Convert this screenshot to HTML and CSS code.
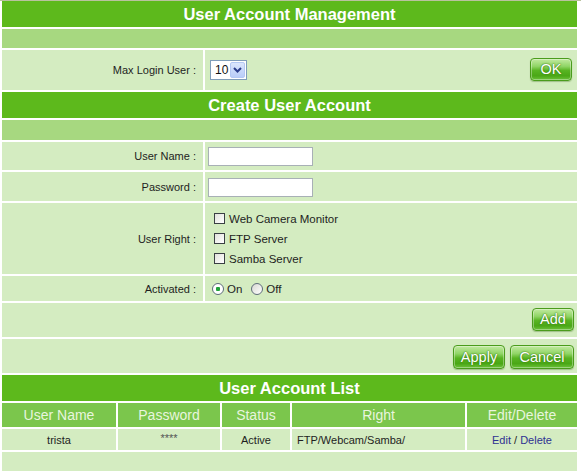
FILE: index.html
```html
<!DOCTYPE html>
<html>
<head>
<meta charset="utf-8">
<title>User Account Management</title>
<link rel="stylesheet" href="styles.css">
</head>
<body>
<div class="frame">
  <div class="page">
    <div class="head">User Account Management</div>
    <div class="band"></div>
    <div class="row r-max">
      <div class="lbl">Max Login User :</div>
      <div class="val spread">
        <div class="select"><span class="sel-text">10</span><span class="sel-btn"><svg width="9" height="6" viewBox="0 0 9 6"><path d="M1 1 L4.5 4.5 L8 1" fill="none" stroke="#2b3d8c" stroke-width="2"/></svg></span></div>
        <button class="btn btn-ok">OK</button>
      </div>
    </div>

    <div class="head">Create User Account</div>
    <div class="band b20"></div>
    <div class="row r-name">
      <div class="lbl">User Name :</div>
      <div class="val"><input class="txt" type="text"></div>
    </div>
    <div class="row r-pass">
      <div class="lbl">Password :</div>
      <div class="val"><input class="txt" type="password"></div>
    </div>
    <div class="row r-right">
      <div class="lbl">User Right :</div>
      <div class="val">
        <div class="checks">
          <label class="opt"><input class="cb" type="checkbox"><span>Web Camera Monitor</span></label>
          <label class="opt"><input class="cb" type="checkbox"><span>FTP Server</span></label>
          <label class="opt"><input class="cb" type="checkbox"><span>Samba Server</span></label>
        </div>
      </div>
    </div>
    <div class="row r-act">
      <div class="lbl">Activated :</div>
      <div class="val radios">
        <label class="ropt"><input class="rd" type="radio" name="act" checked><span>On</span></label>
        <label class="ropt"><input class="rd" type="radio" name="act"><span>Off</span></label>
      </div>
    </div>
    <div class="full r-add"><button class="btn btn-add">Add</button></div>
    <div class="full r-apply"><button class="btn btn-apply">Apply</button><button class="btn btn-cancel">Cancel</button></div>

    <div class="head">User Account List</div>
    <div class="list-row list-head">
      <div>User Name</div><div>Password</div><div>Status</div><div>Right</div><div>Edit/Delete</div>
    </div>
    <div class="list-row list-data">
      <div>trista</div><div class="stars">****</div><div>Active</div><div class="left">FTP/Webcam/Samba/</div><div><a class="lnk">Edit</a> / <a class="lnk">Delete</a></div>
    </div>
    <div class="foot"></div>
  </div>
</div>
</body>
</html>
```

FILE: styles.css
```css
html, body {
  margin: 0;
  padding: 0;
  background: #ffffff;
}
body {
  font-family: "Liberation Sans", Arial, sans-serif;
  font-size: 11px;
  color: #1e1e1e;
}
.frame {
  width: 581px;
  height: 473px;
  border-top: 1px solid #b9c29f;
  box-sizing: border-box;
  padding-left: 2px;
}
.page {
  width: 575px;
  display: flex;
  flex-direction: column;
  gap: 2px;
}
.head {
  height: 26px;
  background: #5db91c;
  color: #ffffff;
  font-weight: bold;
  font-size: 16.5px;
  display: flex;
  align-items: center;
  justify-content: center;
}
.band {
  height: 19px;
  background: #a7d880;
}
.band.b20 { height: 20px; }
.row {
  display: grid;
  grid-template-columns: 201px 1fr;
  gap: 2px;
}
.row > div {
  background: #d4ecc1;
}
.lbl {
  display: flex;
  align-items: center;
  justify-content: flex-end;
  padding-right: 7px;
}
.val {
  display: flex;
  align-items: center;
  padding-left: 3px;
}
.spread {
  justify-content: space-between;
  padding-left: 5px;
  padding-right: 5px;
}
.r-max { height: 40px; }
.r-name { height: 28px; }
.r-pass { height: 29px; }
.r-right { height: 71px; }
.r-act { height: 25px; }

.select {
  width: 35px;
  height: 18px;
  border: 1px solid #7f9db9;
  background: #fff;
  display: flex;
  align-items: stretch;
  box-sizing: content-box;
}
.sel-text {
  flex: 1;
  padding-left: 4px;
  font-size: 12px;
  line-height: 18px;
  color: #111;
}
.sel-btn {
  width: 13px;
  margin: 1px;
  background: linear-gradient(#dbe6fd, #b9cdf8);
  border: 1px solid #b4c8f4;
  border-radius: 2px;
  display: flex;
  align-items: center;
  justify-content: center;
}

.txt {
  width: 105px;
  height: 19px;
  box-sizing: border-box;
  border: 1px solid #a8b0b6;
  background: #fff;
  margin: 0;
  padding: 0 2px;
  font: 11px "Liberation Sans", Arial, sans-serif;
  outline: none;
}
.r-name .txt { margin-top: 1px; }
.r-pass .txt { margin-top: 1px; }

.checks {
  display: flex;
  flex-direction: column;
  padding-left: 6px;
}
.opt {
  height: 20px;
  display: flex;
  align-items: center;
  gap: 4px;
  font-size: 11.5px;
}
.cb {
  appearance: none;
  -webkit-appearance: none;
  width: 11px;
  height: 11px;
  margin: 0;
  border: 1px solid #3a3f44;
  background: linear-gradient(135deg, #e2e2dc, #ffffff);
  box-sizing: border-box;
}
.radios {
  padding-left: 7px;
  gap: 4px;
}
.ropt {
  display: flex;
  align-items: center;
  gap: 3px;
  font-size: 11.5px;
  margin-right: 6px;
}
.ropt + .ropt { margin-left: -1px; }
.rd {
  appearance: none;
  -webkit-appearance: none;
  width: 12px;
  height: 12px;
  margin: 0;
  border-radius: 50%;
  border: 1px solid #5f6d7a;
  background: linear-gradient(135deg, #d8d8d2, #ffffff);
  box-sizing: border-box;
}
.rd:checked {
  background: radial-gradient(circle, #1fa23a 0 2px, #ffffff 2.5px);
}

.full {
  background: #d4ecc1;
  display: flex;
  align-items: center;
  justify-content: flex-end;
  padding-right: 3px;
  gap: 5px;
}
.r-add { height: 34px; }
.r-apply { height: 34px; padding-right: 3px; }

.btn {
  font-family: "Liberation Sans", Arial, sans-serif;
  font-size: 14.5px;
  color: #ffffff;
  text-shadow: 0 0 2px #3a7e12, 0 0 1px #3a7e12;
  border: 1px solid #4a9c1c;
  border-radius: 4px;
  background: linear-gradient(#c2eaa0 0%, #90d566 35%, #58b422 55%, #4aa716 80%, #6cc23a 100%);
  box-shadow: inset 0 0 0 1px rgba(255,255,255,0.35), 0 1px 1px rgba(60,110,30,0.35);
  padding: 0;
  margin: 0;
  height: 23px;
  line-height: 20px;
  cursor: pointer;
}
.btn-ok { width: 42px; margin-top: -2px; }
.btn-add { width: 42px; height: 23px; margin-top: -2px; }
.btn-apply { width: 52px; height: 24px; margin-top: 2px; }
.btn-cancel { width: 64px; height: 24px; margin-top: 2px; }

.list-row {
  display: grid;
  grid-template-columns: 114px 102px 68px 173px 110px;
  gap: 2px;
}
.list-head { height: 24px; }
.list-head > div {
  background: #7bc64c;
  color: #e8f5de;
  font-size: 14px;
  display: flex;
  align-items: center;
  justify-content: center;
}
.list-data { height: 21px; }
.list-data > div {
  background: #d4ecc1;
  display: flex;
  align-items: center;
  justify-content: center;
  font-size: 11px;
  white-space: pre;
}
.list-data > div.left {
  justify-content: flex-start;
  padding-left: 5px;
}
.stars {
  color: #555;
  font-size: 9px;
  padding-bottom: 3px;
}
.lnk {
  color: #2e3192;
  text-decoration: none;
}
.foot {
  height: 19px;
  background: #d4ecc1;
}
```
